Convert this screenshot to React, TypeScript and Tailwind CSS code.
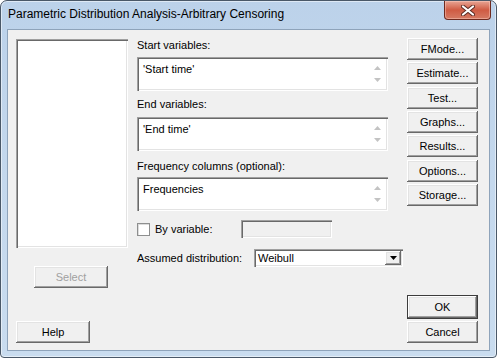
import React from "react";

const F = "font-['Liberation_Sans',Arial,sans-serif] text-[11px] leading-[13px] text-black";
const raised =
  "bg-[#f0f0f0] shadow-[inset_-1px_-1px_0_#696969,inset_1px_1px_0_#ffffff,inset_-2px_-2px_0_#a0a0a0,inset_2px_2px_0_#e3e3e3]";
const sunken =
  "shadow-[inset_1px_1px_0_#a0a0a0,inset_2px_2px_0_#696969,inset_-1px_-1px_0_#ffffff,inset_-2px_-2px_0_#e3e3e3]";

function Btn({ label, className = "", disabled = false }: { label: string; className?: string; disabled?: boolean }) {
  return (
    <div
      className={`${raised} h-[22px] flex items-center justify-center ${disabled ? "text-[#a0a0a0]" : "text-black"} ${className}`}
    >
      {label}
    </div>
  );
}

function Arrow({ up }: { up: boolean }) {
  return (
    <svg width="7" height="4" viewBox="0 0 7 4">
      {up ? <polygon points="0,4 7,4 3.5,0" fill="#c3c3c3" /> : <polygon points="0,0 7,0 3.5,4" fill="#c3c3c3" />}
    </svg>
  );
}

function VarBox({ value }: { value: string }) {
  return (
    <div className={`${sunken} bg-white h-[34px] w-[251px] flex`}>
      <div className="flex-1 pl-[6px] pt-[6px]">{value}</div>
      <div className="w-[17px] mr-[2px] flex flex-col items-center justify-between pt-[7px] pb-[7px] mt-[2px] mb-[2px]">
        <Arrow up />
        <Arrow up={false} />
      </div>
    </div>
  );
}

export default function App() {
  return (
    <div className="w-[497px] h-[358px] bg-white">
      <div className="w-full h-full flex flex-col rounded-t-[7px] rounded-b-[4px] border border-[#4a5868] bg-gradient-to-b from-[#bcd2ea] via-[#c4d8ed] to-[#c9dcef] shadow-[inset_0_0_0_1px_rgba(255,255,255,0.5)]">
        <div className="h-[28px] flex items-start">
          <div className="flex-1 pl-[7px] pt-[6px] font-['Liberation_Sans',Arial,sans-serif] text-[12px] leading-[15px] text-black">
            Parametric Distribution Analysis-Arbitrary Censoring
          </div>
          <div className="mr-[5px] w-[47px] h-[19px] rounded-b-[4px] border border-t-0 border-[#6e2a1f] bg-gradient-to-b from-[#e7a494] via-[#cf5b43] to-[#d57a63] flex items-center justify-center shadow-[inset_0_0_0_1px_rgba(255,210,200,0.45)]">
            <svg width="14" height="11" viewBox="0 0 14 11">
              <path d="M2 1.5 L12 9.5 M12 1.5 L2 9.5" stroke="#5a2a22" strokeWidth="4" strokeLinecap="round" />
              <path d="M2 1.5 L12 9.5 M12 1.5 L2 9.5" stroke="#ffffff" strokeWidth="2.2" strokeLinecap="round" />
            </svg>
          </div>
        </div>
        <div className={`mx-[6px] mb-[6px] flex-1 border border-[#8ea3ba] bg-[#f0f0f0] flex ${F}`}>
          {/* left column */}
          <div className="w-[120px] pl-[8px] pt-[9px] pb-[7px] flex flex-col">
            <div className={`${sunken} bg-white h-[209px] w-[112px]`} />
            <Btn label="Select" disabled className="w-[74px] mt-[18px] ml-[18px]" />
            <Btn label="Help" className="w-[74px] mt-auto" />
          </div>
          {/* middle column */}
          <div className="ml-[9px] w-[266px] pt-[9px] flex flex-col">
            <div>Start variables:</div>
            <div className="mt-[5px]">
              <VarBox value="'Start time'" />
            </div>
            <div className="mt-[7px]">End variables:</div>
            <div className="mt-[6px]">
              <VarBox value="'End time'" />
            </div>
            <div className="mt-[9px]">Frequency columns (optional):</div>
            <div className="mt-[4px]">
              <VarBox value="Frequencies" />
            </div>
            <div className="mt-[9px] h-[18px] flex items-center">
              <div className="w-[104px] flex items-center">
                <div className="w-[13px] h-[13px] bg-white border border-[#8e8f8f] shadow-[inset_1px_1px_0_#dcdcdc]" />
                <div className="ml-[5px]">By variable:</div>
              </div>
              <div className={`${sunken} bg-[#f0f0f0] w-[91px] h-[18px]`} />
            </div>
            <div className="mt-[11px] h-[18px] flex items-center">
              <div className="w-[117px]">Assumed distribution:</div>
              <div className={`${sunken} bg-white w-[149px] h-[18px] flex items-center`}>
                <div className="flex-1 pl-[4px] pt-[1px]">Weibull</div>
                <div className={`${raised} w-[16px] h-[14px] mr-[2px] flex items-center justify-center`}>
                  <svg width="7" height="4" viewBox="0 0 7 4">
                    <polygon points="0,0 7,0 3.5,4" fill="#000" />
                  </svg>
                </div>
              </div>
            </div>
          </div>
          {/* right column */}
          <div className="ml-[4px] w-[71px] pt-[8px] pb-[7px] flex flex-col">
            <Btn label="FMode..." />
            <Btn label="Estimate..." className="mt-[2px]" />
            <Btn label="Test..." className="mt-[3px]" />
            <Btn label="Graphs..." className="mt-[2px]" />
            <Btn label="Results..." className="mt-[2px]" />
            <Btn label="Options..." className="mt-[3px]" />
            <Btn label="Storage..." className="mt-[2px]" />
            <div className="mt-auto border border-[#3c3c3c]">
              <Btn label="OK" className="h-[20px]" />
            </div>
            <Btn label="Cancel" className="mt-[2px]" />
          </div>
        </div>
      </div>
    </div>
  );
}
